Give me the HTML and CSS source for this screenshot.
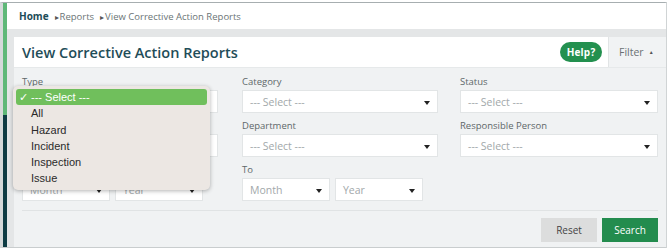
FILE: index.html
```html
<!DOCTYPE html>
<html>
<head>
<meta charset="utf-8">
<link rel="stylesheet" href="styles.css">
</head>
<body>
<div class="app">
  <div class="rail"></div>
  <div class="main">
    <div class="crumbs"><b>Home</b><span class="sep">&#9656;</span>Reports<span class="sep">&#9656;</span>View Corrective Action Reports</div>
    <div class="panel">
      <div class="head">
        <h1>View Corrective Action Reports</h1>
        <span class="help">Help?</span>
        <div class="filter">Filter <span class="up">&#9650;</span></div>
      </div>
      <div class="body">
        <div class="grid">
          <div class="field"><label>Type</label><div class="sel">--- Select ---</div></div>
          <div class="field"><label>Category</label><div class="sel">--- Select ---</div></div>
          <div class="field"><label>Status</label><div class="sel">--- Select ---</div></div>
          <div class="field"><label>Division</label><div class="sel">--- Select ---</div></div>
          <div class="field"><label>Department</label><div class="sel">--- Select ---</div></div>
          <div class="field"><label>Responsible Person</label><div class="sel">--- Select ---</div></div>
          <div class="field"><label>From</label><div class="pair"><div class="sel">Month</div><div class="sel">Year</div></div></div>
          <div class="field"><label>To</label><div class="pair"><div class="sel">Month</div><div class="sel">Year</div></div></div>
        </div>
        <div class="actions">
          <button class="btn reset">Reset</button>
          <button class="btn search">Search</button>
        </div>
      </div>
    </div>
  </div>
  <div class="menu">
    <div class="item on"><span class="check">&#10003;</span>--- Select ---</div>
    <div class="item">All</div>
    <div class="item">Hazard</div>
    <div class="item">Incident</div>
    <div class="item">Inspection</div>
    <div class="item">Issue</div>
  </div>
</div>
</body>
</html>
```

FILE: styles.css
```css
* { box-sizing: border-box; }
html, body { margin: 0; padding: 0; background: #fff; }
body { font-family: "Open Sans", "Liberation Sans", sans-serif; }

.app {
  position: relative;
  display: flex;
  margin-top: 2px;
  height: 246px;
  border-top: 1px solid #a7aeb0;
  border-bottom: 1px solid #c9cdce;
  border-right: 2px solid #d0d4d5;
  border-left: 3px solid #d5d9da;
}
.rail {
  width: 4px;
  flex: none;
  background: linear-gradient(#5fb878 0, #5fb878 112px, #0e3c44 112px);
}
.main {
  flex: 1;
  background: #e4e6e7;
  display: flex;
  flex-direction: column;
}
.crumbs {
  height: 26px;
  background: #fff;
  display: flex;
  align-items: center;
  padding-left: 12px;
  font-size: 9.5px;
  color: #6b7476;
}
.crumbs b { color: #1d4c57; font-weight: 700; font-size: 10px; }
.sep { font-size: 8px; margin: 0 1px 0 6px; color: #555; }

.panel {
  margin: 8px 0 0 7px;
  flex: 1;
  display: flex;
  flex-direction: column;
}
.head {
  height: 31px;
  background: #fff;
  display: flex;
  align-items: center;
  padding-left: 8px;
  border-bottom: 1px solid #e6e9ea;
}
.head h1 {
  margin: 0;
  flex: 1;
  font-size: 14.5px;
  font-weight: 600;
  color: #1f4d58;
}
.help {
  background: #23904f;
  color: #fff;
  font-weight: 700;
  font-size: 10px;
  height: 20px;
  width: 42px;
  border-radius: 10px;
  display: flex;
  align-items: center;
  justify-content: center;
  margin-right: 6px;
  letter-spacing: 0.2px;
}
.filter {
  width: 58px;
  align-self: stretch;
  background: #f1f3f4;
  border-left: 1px solid #e1e4e5;
  display: flex;
  align-items: center;
  padding-left: 10px;
  font-size: 10.5px;
  color: #6a7173;
}
.up { font-size: 5px; margin-left: 5px; color: #555; }

.body {
  flex: 1;
  background: #f0f2f3;
  padding: 8px 8px 0 8px;
}
.grid {
  display: grid;
  grid-template-columns: 196px 220px 220px;
  row-gap: 7px;
  width: 636px;
}
.grid .field:nth-child(3n+2) { padding-left: 24px; }
.grid .field:nth-child(3n) { padding-left: 22px; }
.field label {
  display: block;
  font-size: 9.5px;
  color: #5e6769;
  height: 12px;
  line-height: 12px;
  margin-bottom: 2px;
}
.sel {
  position: relative;
  height: 23px;
  background: #fff;
  border: 1px solid #e2e5e6;
  font-size: 10.5px;
  color: #a2a8aa;
  display: flex;
  align-items: center;
  padding-left: 7px;
}
.sel::after {
  content: "";
  position: absolute;
  right: 7px;
  top: 10px;
  border-left: 3px solid transparent;
  border-right: 3px solid transparent;
  border-top: 4px solid #222;
}
.pair { display: flex; gap: 5px; }
.pair .sel { width: 88px; }

.actions {
  margin-top: 9px;
  border-top: 1px solid #e0e3e4;
  padding-top: 7px;
  display: flex;
  justify-content: flex-end;
  gap: 5px;
  width: 636px;
}
.btn {
  height: 24px;
  width: 56px;
  border: 0;
  font-family: "Open Sans", "Liberation Sans", sans-serif;
  font-size: 10px;
  padding: 0;
}
.reset { background: #dcdddd; color: #444; }
.search { background: #238c4e; color: #fff; }

.menu {
  position: absolute;
  left: 10px;
  top: 83px;
  width: 197px;
  height: 104px;
  background: #ece7e3;
  border-radius: 5px;
  box-shadow: 0 1px 4px rgba(0,0,0,0.3);
  padding: 3px;
  font-family: "Liberation Sans", sans-serif;
  font-size: 11px;
  color: #2a2a2a;
}
.item {
  height: 16.3px;
  line-height: 16px;
  padding-left: 15px;
}
.item.on {
  background: #70bf5c;
  color: #fff;
  border-radius: 3px;
  padding-left: 3px;
}
.check { display: inline-block; width: 12px; }
```
